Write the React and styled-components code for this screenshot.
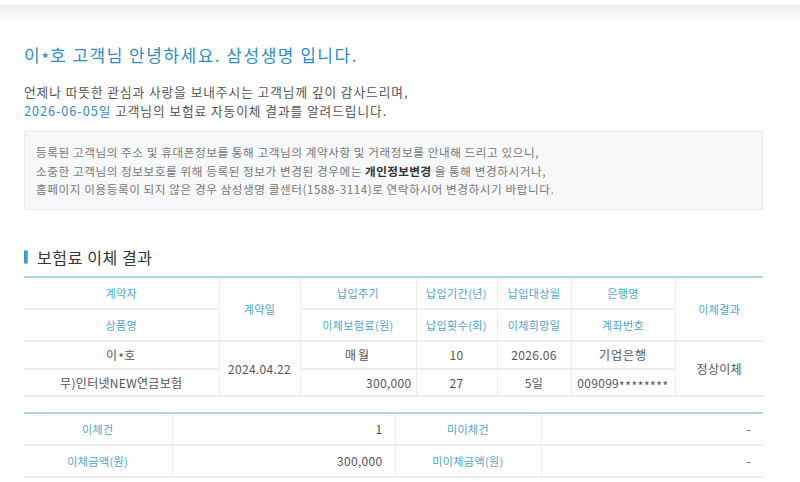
import React from 'react';
import styled, { createGlobalStyle } from 'styled-components';

const GlobalStyle = createGlobalStyle`
  html, body {
    margin: 0;
    padding: 0;
    background: #fff;
  }
  body {
    font-family: "Noto Sans CJK KR", "Noto Sans", "Liberation Sans", sans-serif;
    color: #555;
  }
`;

const TopShade = styled.div`
  height: 25px;
  background: linear-gradient(to bottom, #fff 0, #fff 5px, #eceeed 5px, #fff 25px);
`;

const Page = styled.div`
  padding: 0 37px 0 24px;
`;

const Greeting = styled.h1`
  margin: 18px 0 0;
  font-size: 17px;
  line-height: 24px;
  font-weight: 400;
  letter-spacing: 1.5px;
  color: #2b8dc6;
`;

const Intro = styled.p`
  margin: 15px 0 0;
  font-size: 12.7px;
  line-height: 19px;
  letter-spacing: 0.95px;
  color: #555;
`;

const Accent = styled.span`
  color: #2b8dc6;
`;

const Star = styled.span`
  line-height: 0;
  vertical-align: -0.25em;
  letter-spacing: 0.05em;
`;

const InfoBox = styled.div`
  margin-top: 11px;
  padding: 11px 11px 10px;
  background: #f7f8fa;
  border: 1px solid #e9ebee;
  font-size: 11.6px;
  line-height: 18.5px;
  letter-spacing: 0.58px;
  color: #777;
`;

const Strong = styled.b`
  color: #333;
  font-weight: 700;
  letter-spacing: 0.4px;
`;

const SectionTitle = styled.h2`
  display: flex;
  align-items: center;
  gap: 9px;
  margin: 35px 0 0;
  font-size: 16px;
  line-height: 24px;
  font-weight: 400;
  letter-spacing: 0.6px;
  color: #333;

  &::before {
    content: '';
    width: 4px;
    height: 14px;
    border-radius: 2px;
    background: linear-gradient(to right, #2f8fc2, #5ab4dc);
  }
`;

const Table = styled.table`
  width: 739px;
  margin-top: ${p => p.$gap}px;
  border-collapse: collapse;
  table-layout: fixed;
  border-top: 2px solid #a9d7e8;
  border-bottom: 2px solid #ededed;
`;

const Row = styled.tr`
  height: ${p => p.$h}px;
`;

const Cell = styled.td`
  padding: 0 ${p => (p.$right ? '12px' : '2px')} 0 2px;
  border-left: 1px solid #ececec;
  border-bottom: 2px solid #ededed;
  text-align: ${p => (p.$right ? 'right' : 'center')};
  font-size: ${p => (p.$head ? '11px' : '12px')};
  color: ${p => (p.$head ? '#4aa5d2' : '#555')};
  white-space: nowrap;
  letter-spacing: ${p => p.$spaced || (p.$head ? '0.4px' : '0.3px')};

  &:first-child {
    border-left: none;
  }
`;

const widths1 = [195, 81, 116, 81, 74, 104, 88];
const widths2 = [148, 223, 146, 222];

const Cols = ({ widths }) => (
  <colgroup>
    {widths.map((w, i) => (
      <col key={i} style={{ width: w }} />
    ))}
  </colgroup>
);

const Masked = ({ n }) => <Star>{'*'.repeat(n)}</Star>;

export default function App() {
  return (
    <>
      <GlobalStyle />
      <TopShade />
      <Page>
        <Greeting>이<Masked n={1} />호 고객님 안녕하세요. 삼성생명 입니다.</Greeting>
        <Intro>
          언제나 따뜻한 관심과 사랑을 보내주시는 고객님께 깊이 감사드리며,
          <br />
          <Accent>2026-06-05일</Accent> 고객님의 보험료 자동이체 결과를 알려드립니다.
        </Intro>
        <InfoBox>
          등록된 고객님의 주소 및 휴대폰정보를 통해 고객님의 계약사항 및 거래정보를 안내해 드리고 있으니,
          <br />
          소중한 고객님의 정보보호를 위해 등록된 정보가 변경된 경우에는 <Strong>개인정보변경</Strong> 을 통해 변경하시거나,
          <br />
          홈페이지 이용등록이 되지 않은 경우 삼성생명 콜센터(1588-3114)로 연락하시어 변경하시기 바랍니다.
        </InfoBox>

        <SectionTitle>보험료 이체 결과</SectionTitle>
        <Table $gap={7}>
          <Cols widths={widths1} />
          <tbody>
            <Row $h={32}>
              <Cell $head>계약자</Cell>
              <Cell $head rowSpan={2}>계약일</Cell>
              <Cell $head>납입주기</Cell>
              <Cell $head>납입기간(년)</Cell>
              <Cell $head>납입대상월</Cell>
              <Cell $head>은행명</Cell>
              <Cell $head rowSpan={2}>이체결과</Cell>
            </Row>
            <Row $h={32}>
              <Cell $head>상품명</Cell>
              <Cell $head>이체보험료(원)</Cell>
              <Cell $head>납입횟수(회)</Cell>
              <Cell $head>이체희망일</Cell>
              <Cell $head>계좌번호</Cell>
            </Row>
            <Row $h={28}>
              <Cell $spaced="1px">이<Masked n={1} />호</Cell>
              <Cell rowSpan={2}>2024.04.22</Cell>
              <Cell $spaced="2px">매월</Cell>
              <Cell>10</Cell>
              <Cell>2026.06</Cell>
              <Cell $spaced="1px">기업은행</Cell>
              <Cell rowSpan={2}>정상이체</Cell>
            </Row>
            <Row $h={27}>
              <Cell>무)인터넷NEW연금보험</Cell>
              <Cell $right style={{ paddingRight: 4 }}>300,000</Cell>
              <Cell>27</Cell>
              <Cell>5일</Cell>
              <Cell>009099<Masked n={8} /></Cell>
            </Row>
          </tbody>
        </Table>

        <Table $gap={15}>
          <Cols widths={widths2} />
          <tbody>
            <Row $h={32}>
              <Cell $head>이체건</Cell>
              <Cell $right>1</Cell>
              <Cell $head>미이체건</Cell>
              <Cell $right>-</Cell>
            </Row>
            <Row $h={32}>
              <Cell $head>이체금액(원)</Cell>
              <Cell $right>300,000</Cell>
              <Cell $head>미이체금액(원)</Cell>
              <Cell $right>-</Cell>
            </Row>
          </tbody>
        </Table>
      </Page>
    </>
  );
}
